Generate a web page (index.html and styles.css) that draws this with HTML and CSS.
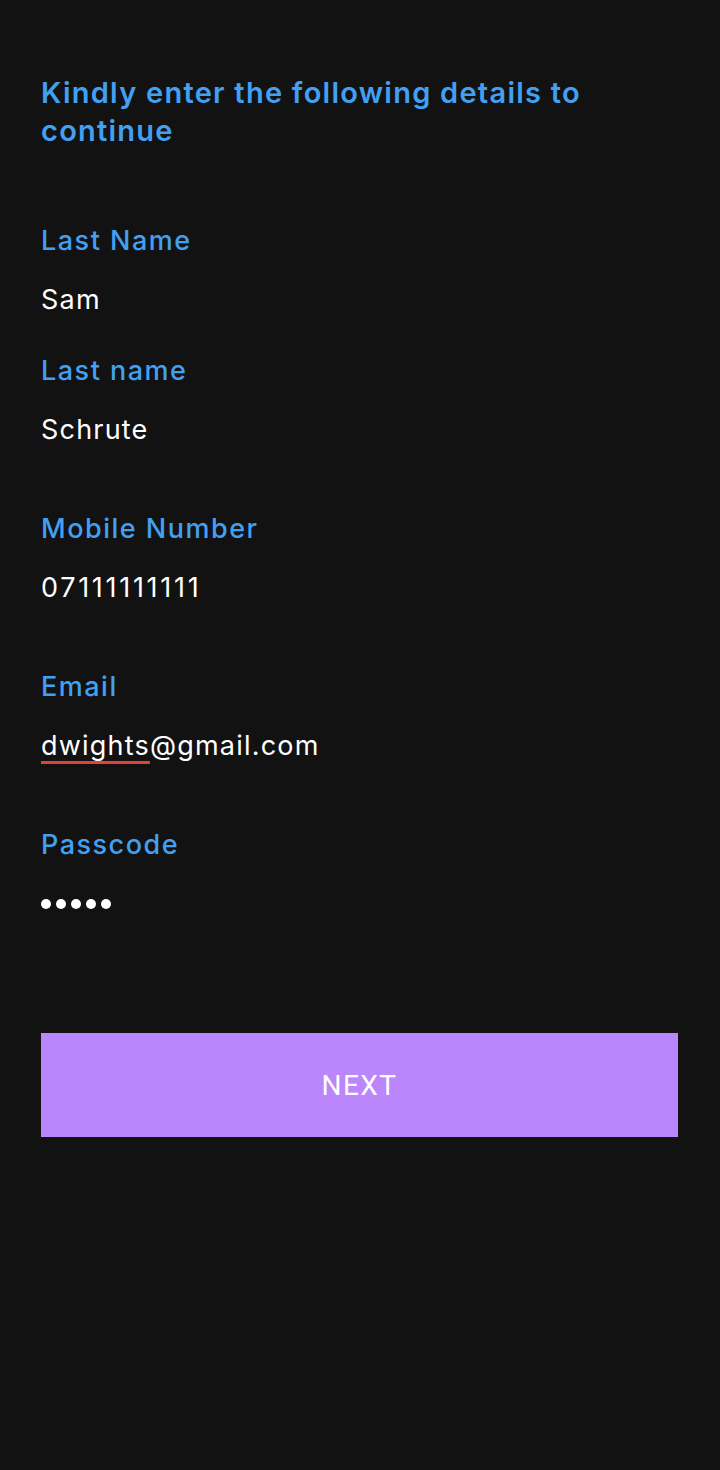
FILE: index.html
```html
<!DOCTYPE html>
<html lang="en">
<head>
<meta charset="utf-8">
<title>Details</title>
<link rel="stylesheet" href="styles.css">
</head>
<body>
<main class="screen">
  <h1 class="title">Kindly enter the following details to continue</h1>
  <div class="fields">
    <div class="field field-tight">
      <div class="label">Last Name</div>
      <div class="value">Sam</div>
    </div>
    <div class="field">
      <div class="label">Last name</div>
      <div class="value">Schrute</div>
    </div>
    <div class="field">
      <div class="label">Mobile Number</div>
      <div class="value phone">07111111111</div>
    </div>
    <div class="field">
      <div class="label">Email</div>
      <div class="value"><span class="misspelled">dwights</span>@gmail.com</div>
    </div>
    <div class="field">
      <div class="label">Passcode</div>
      <div class="value dots"><span></span><span></span><span></span><span></span><span></span></div>
    </div>
  </div>
  <button class="next" type="button">NEXT</button>
</main>
</body>
</html>
```

FILE: styles.css
```css
html, body {
  margin: 0;
  padding: 0;
  background: #121212;
}
body {
  width: 720px;
  height: 1470px;
  font-family: Inter, "Noto Sans", sans-serif;
}
.screen {
  padding: 74px 42px 0 41px;
}
.title {
  margin: 0;
  width: 600px;
  color: #42a0f2;
  font-size: 29px;
  font-weight: 600;
  line-height: 38px;
  letter-spacing: 1.25px;
}
.fields {
  margin-top: 72px;
  display: flex;
  flex-direction: column;
  gap: 61px;
}
.field {
  display: flex;
  flex-direction: column;
  gap: 21px;
}
.field-tight {
  margin-bottom: -28px;
}
.label {
  color: #42a0f2;
  font-size: 27px;
  font-weight: 500;
  line-height: 38px;
  letter-spacing: 1.5px;
}
.value {
  color: #ffffff;
  font-size: 27px;
  font-weight: 400;
  line-height: 38px;
  letter-spacing: 1.2px;
}
.phone {
  letter-spacing: 2.7px;
}
.misspelled {
  text-decoration: underline;
  text-decoration-color: #e5413b;
  text-decoration-thickness: 3px;
  text-underline-offset: 6px;
}
.dots {
  height: 38px;
  display: flex;
  align-items: center;
  gap: 5px;
}
.dots span {
  width: 10px;
  height: 10px;
  border-radius: 50%;
  background: #ffffff;
}
.next {
  display: block;
  margin-top: 110px;
  width: 637px;
  height: 104px;
  border: none;
  background: #bb86fc;
  color: #ffffff;
  font-family: Roboto, "Noto Sans", sans-serif;
  font-size: 28px;
  font-weight: 400;
  letter-spacing: 1.5px;
  padding: 0;
}
```
